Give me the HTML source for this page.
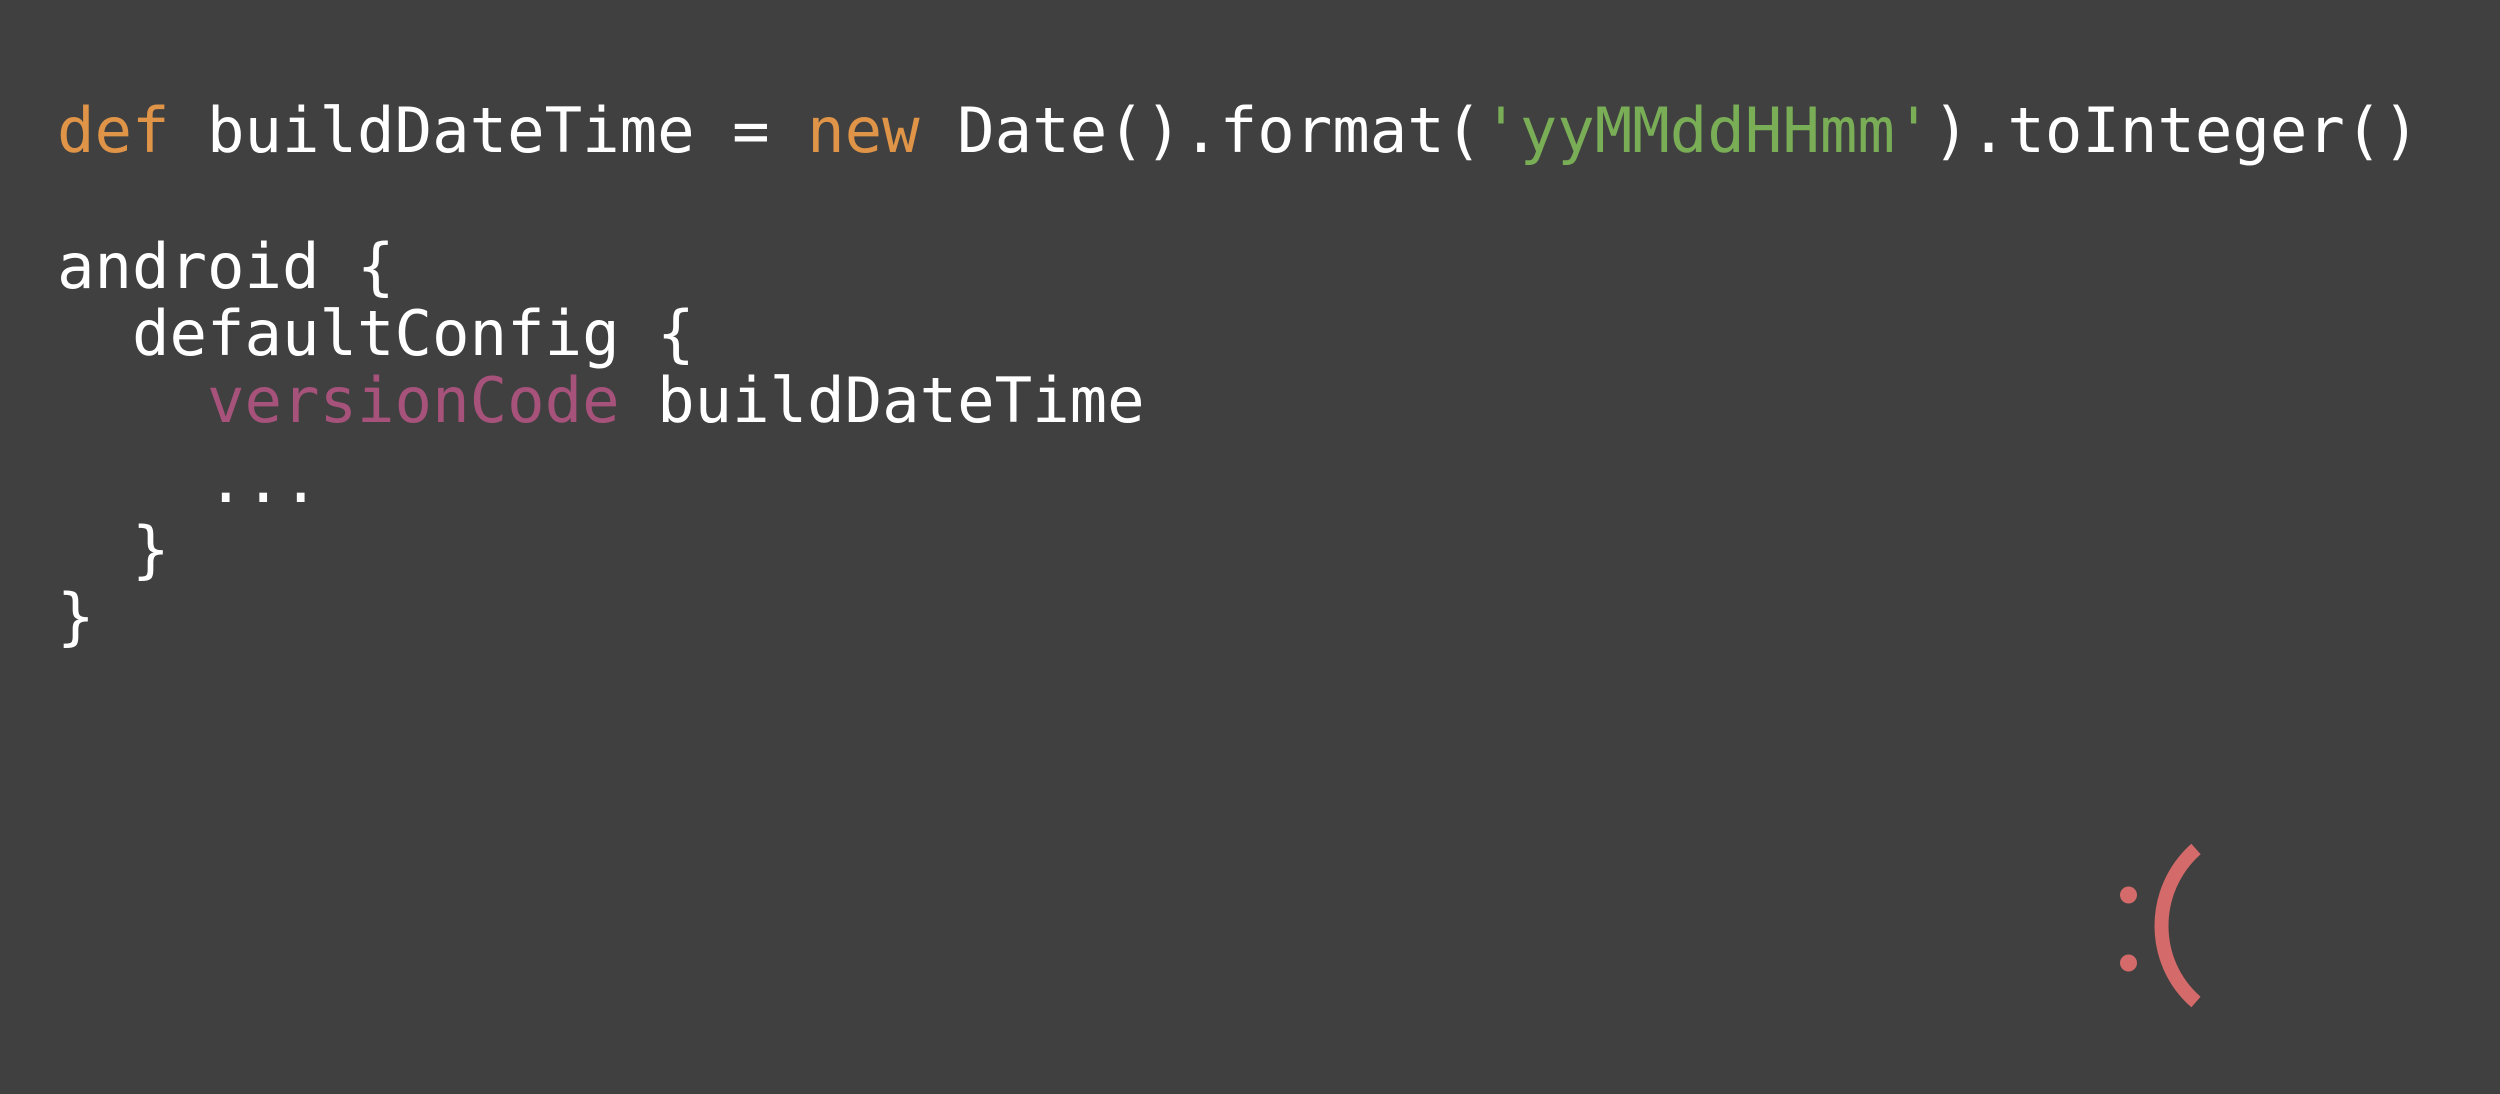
<!DOCTYPE html>
<html><head><meta charset="utf-8"><style>
html,body{margin:0;padding:0;background:#404040;width:2500px;height:1094px;overflow:hidden}
.l{position:absolute;left:57px;font-family:"DejaVu Sans Mono","Liberation Mono",monospace;font-size:62.3px;line-height:1;color:#fff;white-space:pre}
.o{color:#df9447}.g{color:#79ad56}.p{color:#a6527a}
</style></head><body>
<div class="l" style="top:100px"><span class="o">def</span> buildDateTime = <span class="o">new</span> Date().format(<span class="g">'yyMMddHHmm'</span>).toInteger()</div>
<div class="l" style="top:236px">android {</div>
<div class="l" style="top:303px">  defaultConfig {</div>
<div class="l" style="top:370px">    <span class="p">versionCode</span> buildDateTime</div>
<div class="l" style="top:450px">    ...</div>
<div class="l" style="top:519px">  }</div>
<div class="l" style="top:586px">}</div>
<svg width="2500" height="1094" style="position:absolute;left:0;top:0">
<circle cx="2128.5" cy="895" r="8.5" fill="#d46a6a"/>
<circle cx="2128.5" cy="963" r="8.5" fill="#d46a6a"/>
<path d="M2196 849 C2150 890 2150 962 2196 1002" stroke="#d46a6a" stroke-width="14" fill="none"/>
</svg>
</body></html>
